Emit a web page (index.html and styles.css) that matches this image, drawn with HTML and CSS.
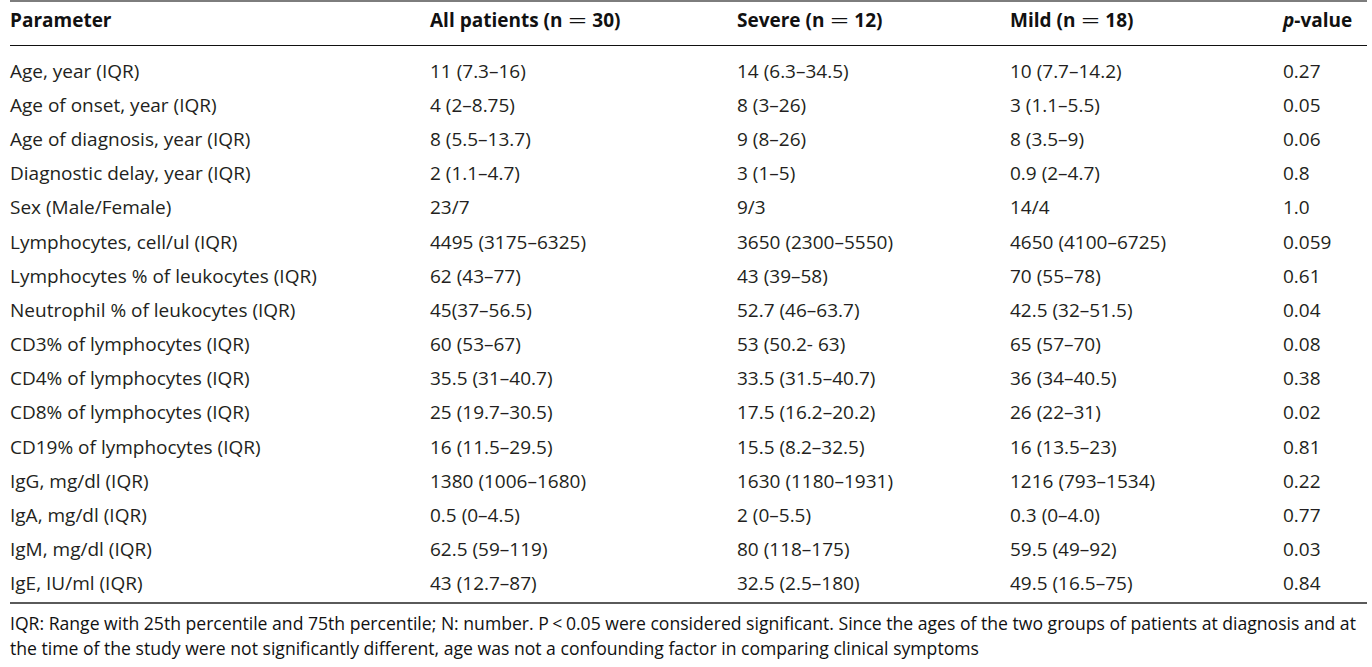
FILE: index.html
```html
<!DOCTYPE html>
<html lang="en">
<head>
<meta charset="utf-8">
<title>Patient parameters</title>
<link rel="stylesheet" href="styles.css">
</head>
<body>
<div class="wrap">
<table class="data">
<colgroup>
<col class="c1"><col class="c2"><col class="c3"><col class="c4"><col class="c5">
</colgroup>
<thead>
<tr><th>Parameter</th><th>All patients (n<span class="eq">=</span>30)</th><th>Severe (n<span class="eq">=</span>12)</th><th>Mild (n<span class="eq">=</span>18)</th><th><i>p</i>-value</th></tr>
</thead>
<tbody>
<tr><td>Age, year (IQR)</td><td>11 (7.3–16)</td><td>14 (6.3–34.5)</td><td>10 (7.7–14.2)</td><td>0.27</td></tr>
<tr><td>Age of onset, year (IQR)</td><td>4 (2–8.75)</td><td>8 (3–26)</td><td>3 (1.1–5.5)</td><td>0.05</td></tr>
<tr><td>Age of diagnosis, year (IQR)</td><td>8 (5.5–13.7)</td><td>9 (8–26)</td><td>8 (3.5–9)</td><td>0.06</td></tr>
<tr><td>Diagnostic delay, year (IQR)</td><td>2 (1.1–4.7)</td><td>3 (1–5)</td><td>0.9 (2–4.7)</td><td>0.8</td></tr>
<tr><td>Sex (Male/Female)</td><td>23/7</td><td>9/3</td><td>14/4</td><td>1.0</td></tr>
<tr><td>Lymphocytes, cell/ul (IQR)</td><td>4495 (3175–6325)</td><td>3650 (2300–5550)</td><td>4650 (4100–6725)</td><td>0.059</td></tr>
<tr><td>Lymphocytes % of leukocytes (IQR)</td><td>62 (43–77)</td><td>43 (39–58)</td><td>70 (55–78)</td><td>0.61</td></tr>
<tr><td>Neutrophil % of leukocytes (IQR)</td><td>45(37–56.5)</td><td>52.7 (46–63.7)</td><td>42.5 (32–51.5)</td><td>0.04</td></tr>
<tr><td>CD3% of lymphocytes (IQR)</td><td>60 (53–67)</td><td>53 (50.2- 63)</td><td>65 (57–70)</td><td>0.08</td></tr>
<tr><td>CD4% of lymphocytes (IQR)</td><td>35.5 (31–40.7)</td><td>33.5 (31.5–40.7)</td><td>36 (34–40.5)</td><td>0.38</td></tr>
<tr><td>CD8% of lymphocytes (IQR)</td><td>25 (19.7–30.5)</td><td>17.5 (16.2–20.2)</td><td>26 (22–31)</td><td>0.02</td></tr>
<tr><td>CD19% of lymphocytes (IQR)</td><td>16 (11.5–29.5)</td><td>15.5 (8.2–32.5)</td><td>16 (13.5–23)</td><td>0.81</td></tr>
<tr><td>IgG, mg/dl (IQR)</td><td>1380 (1006–1680)</td><td>1630 (1180–1931)</td><td>1216 (793–1534)</td><td>0.22</td></tr>
<tr><td>IgA, mg/dl (IQR)</td><td>0.5 (0–4.5)</td><td>2 (0–5.5)</td><td>0.3 (0–4.0)</td><td>0.77</td></tr>
<tr><td>IgM, mg/dl (IQR)</td><td>62.5 (59–119)</td><td>80 (118–175)</td><td>59.5 (49–92)</td><td>0.03</td></tr>
<tr><td>IgE, IU/ml (IQR)</td><td>43 (12.7–87)</td><td>32.5 (2.5–180)</td><td>49.5 (16.5–75)</td><td>0.84</td></tr>
</tbody>
</table>
<p class="note">IQR: Range with 25th percentile and 75th percentile; N: number. P<span class="lt">&lt;</span>0.05 were considered significant. Since the ages of the two groups of patients at diagnosis and at<br>the time of the study were not significantly different, age was not a confounding factor in comparing clinical symptoms</p>
</div>
</body>
</html>
```

FILE: styles.css
```css
html, body {
  margin: 0;
  padding: 0;
  background: #ffffff;
}

body {
  font-family: "Open Sans", "Noto Sans", sans-serif;
  color: #231f20;
}

.wrap {
  padding-left: 10px;
  width: 1357px;
}

.data {
  width: 1357px;
  border-collapse: collapse;
  table-layout: fixed;
  font-size: 19px;
  line-height: 24px;
  border-top: 2px solid #7d7d7d;
  border-bottom: 2px solid #5a5a5a;
}

.c1 { width: 420px; }
.c2 { width: 307px; }
.c3 { width: 273px; }
.c4 { width: 273px; }
.c5 { width: 84px; }

.data th {
  text-align: left;
  font-weight: 700;
  color: #111;
  padding: 6px 0 13px 0;
  border-bottom: 1px solid #111;
  white-space: nowrap;
}

.eq {
  display: inline-block;
  margin: 0 0.5em;
  font-weight: 400;
  transform: scaleX(1.75);
}

.data td {
  padding: 5.1px 0;
  white-space: nowrap;
}

.data tbody tr:first-child td {
  padding-top: 12.6px;
}

.data tbody tr:last-child td {
  padding-bottom: 7px;
}

.note {
  margin: 0;
  padding-top: 7px;
  font-size: 17.6px;
  line-height: 25px;
  color: #111;
  white-space: nowrap;
}

.lt {
  margin: 0 0.2em;
}
```
